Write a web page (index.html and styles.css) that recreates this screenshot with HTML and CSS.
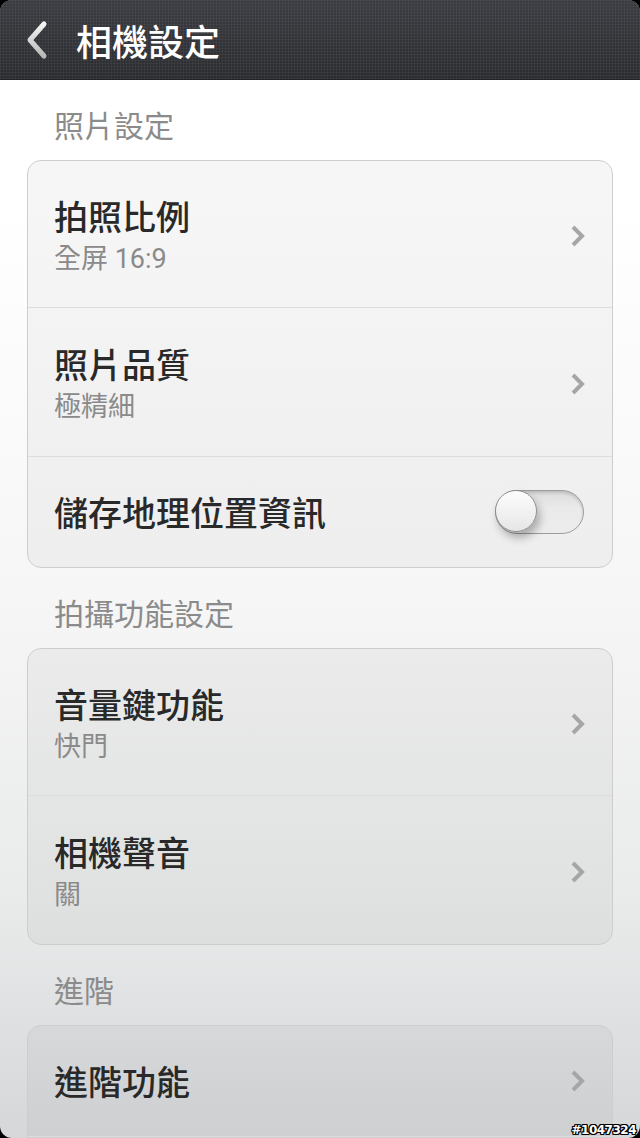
FILE: index.html
```html
<!DOCTYPE html>
<html lang="zh-Hant">
<head>
<meta charset="utf-8">
<title>相機設定</title>
<link rel="stylesheet" href="styles.css">
</head>
<body>
<div class="screen">
  <header class="topbar">
    <svg class="back" width="30" height="40" viewBox="0 0 30 40">
      <defs>
        <linearGradient id="bk" x1="0" y1="0" x2="0" y2="1">
          <stop offset="0" stop-color="#f4f4f4"/>
          <stop offset="1" stop-color="#b8b8b8"/>
        </linearGradient>
      </defs>
      <path d="M20 4 L6 20 L20 36" fill="none" stroke="url(#bk)" stroke-width="5" stroke-linecap="round" stroke-linejoin="round"/>
    </svg>
    <h1 class="title">相機設定</h1>
  </header>

  <main class="content">
    <div class="section-label">照片設定</div>
    <div class="card">
      <div class="row row-tall">
        <div class="texts">
          <div class="row-title">拍照比例</div>
          <div class="row-sub">全屏 16:9</div>
        </div>
        <svg class="chev" width="16" height="24" viewBox="0 0 16 24"><path d="M3 3 L12 12 L3 21" fill="none" stroke="#a6a6a6" stroke-width="4"/></svg>
      </div>
      <div class="row row-tall">
        <div class="texts">
          <div class="row-title">照片品質</div>
          <div class="row-sub">極精細</div>
        </div>
        <svg class="chev" width="16" height="24" viewBox="0 0 16 24"><path d="M3 3 L12 12 L3 21" fill="none" stroke="#a6a6a6" stroke-width="4"/></svg>
      </div>
      <div class="row row-short">
        <div class="texts">
          <div class="row-title">儲存地理位置資訊</div>
        </div>
        <div class="toggle"><div class="knob"></div></div>
      </div>
    </div>

    <div class="section-label">拍攝功能設定</div>
    <div class="card">
      <div class="row row-tall">
        <div class="texts">
          <div class="row-title">音量鍵功能</div>
          <div class="row-sub">快門</div>
        </div>
        <svg class="chev" width="16" height="24" viewBox="0 0 16 24"><path d="M3 3 L12 12 L3 21" fill="none" stroke="#a6a6a6" stroke-width="4"/></svg>
      </div>
      <div class="row row-tall">
        <div class="texts">
          <div class="row-title">相機聲音</div>
          <div class="row-sub">關</div>
        </div>
        <svg class="chev" width="16" height="24" viewBox="0 0 16 24"><path d="M3 3 L12 12 L3 21" fill="none" stroke="#a6a6a6" stroke-width="4"/></svg>
      </div>
    </div>

    <div class="section-label">進階</div>
    <div class="card">
      <div class="row row-short">
        <div class="texts">
          <div class="row-title">進階功能</div>
        </div>
        <svg class="chev" width="16" height="24" viewBox="0 0 16 24"><path d="M3 3 L12 12 L3 21" fill="none" stroke="#a6a6a6" stroke-width="4"/></svg>
      </div>
      <div class="row row-short"></div>
    </div>
  </main>
  <div class="watermark">#1047324</div>
</div>
</body>
</html>
```

FILE: styles.css
```css
* { box-sizing: border-box; }
html, body {
  margin: 0;
  padding: 0;
  background: #000;
}
body {
  width: 640px;
  height: 1138px;
  overflow: hidden;
  font-family: "Noto Sans CJK TC", "Noto Sans", sans-serif;
}
.screen {
  position: relative;
  width: 640px;
  height: 1138px;
  border-radius: 12px;
  overflow: hidden;
  background: linear-gradient(to bottom, #ffffff 0px, #ffffff 200px, #f6f6f6 600px, #e9eaea 900px, #d6d7d9 1138px);
  display: flex;
  flex-direction: column;
}
.topbar {
  height: 80px;
  flex: none;
  display: flex;
  align-items: center;
  padding-left: 24px;
  background-color: #2d2f33;
  background-image:
    repeating-linear-gradient(to right, rgba(255,255,255,0.045) 0 1px, transparent 1px 3px),
    repeating-linear-gradient(to bottom, rgba(255,255,255,0.045) 0 1px, transparent 1px 3px),
    linear-gradient(to bottom, #3a3c41, #2a2c30);
  border-bottom: 1px solid #222;
}
.back {
  display: block;
  margin-right: 22px;
}
.title {
  margin: 0;
  color: #fff;
  font-size: 36px;
  font-weight: 500;
  line-height: 80px;
}
.content {
  flex: 1;
  padding: 0 27px;
}
.section-label {
  padding: 24px 0 16px 27px;
  font-size: 30px;
  line-height: 40px;
  color: #8b8b8b;
}
.card {
  border: 1px solid #cdcdcd;
  border-radius: 14px;
  background: rgba(0,0,0,0.035);
  overflow: hidden;
}
.row {
  display: flex;
  align-items: center;
  justify-content: space-between;
  padding: 0 26px 0 26px;
  border-top: 1px solid #dcdcdc;
}
.row-tall { padding-top: 3px; }
.row:first-child { border-top: none; }
.row-tall { height: 149px; }
.row:first-child.row-tall { height: 146px; }
.row-short { height: 111px; }
.row:first-child.row-short { height: 110px; }
.texts {
  display: flex;
  flex-direction: column;
}
.row-title {
  font-size: 34px;
  line-height: 42px;
  font-weight: 500;
  color: #292929;
}
.row-sub {
  font-size: 27px;
  line-height: 34px;
  color: #8a8a8a;
  margin-top: 5px;
  font-family: "Roboto", "Noto Sans CJK TC", sans-serif;
}
.chev { display: block; }
.toggle {
  position: relative;
  width: 89px;
  height: 44px;
  border-radius: 22px;
  background: linear-gradient(to bottom, #dcdcdc, #eaeaea 40%, #ececec);
  border: 1.5px solid #9d9d9d;
  box-shadow: inset 0 2px 3px rgba(0,0,0,0.15);
  margin-right: 2px;
}
.knob {
  position: absolute;
  left: -1px;
  top: -1px;
  width: 42px;
  height: 42px;
  border-radius: 50%;
  background: linear-gradient(to bottom, #fdfdfd, #e6e6e6);
  border: 1.5px solid #8e8e8e;
  box-shadow: 3px 6px 8px rgba(0,0,0,0.28), inset 0 1px 0 #fff;
}
.watermark {
  position: absolute;
  right: 4px;
  bottom: 1px;
  font-family: "DejaVu Sans", sans-serif;
  font-size: 12px;
  font-weight: bold;
  color: #fff;
  letter-spacing: -0.5px;
  text-shadow: 1px 0 0 #000, -1px 0 0 #000, 0 1px 0 #000, 0 -1px 0 #000, 1px 1px 0 #000, -1px -1px 0 #000, 1px -1px 0 #000, -1px 1px 0 #000;
}
```
